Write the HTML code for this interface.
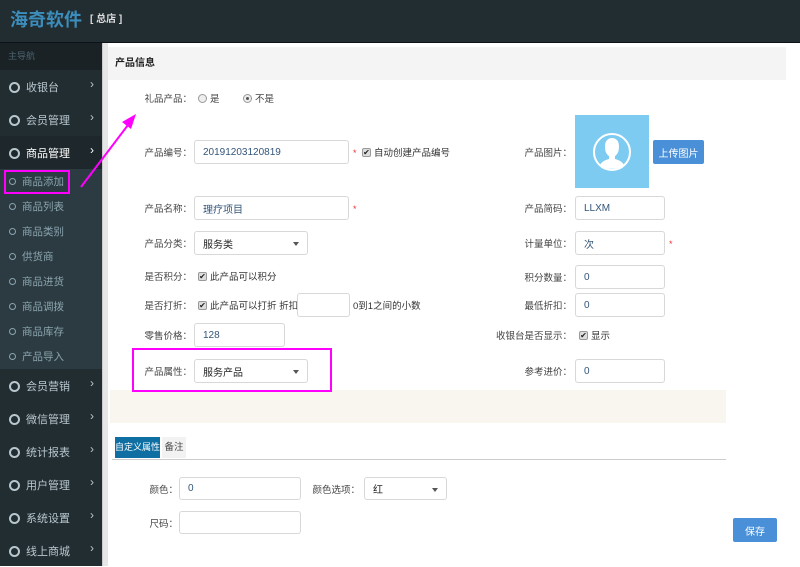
<!DOCTYPE html>
<html><head><meta charset="utf-8"><style>
*{margin:0;padding:0;box-sizing:border-box}
body{width:800px;height:566px;overflow:hidden;background:#fff;font-family:"Liberation Sans","Noto Sans CJK SC",sans-serif;font-size:10px;color:#333;position:relative}
.a{position:absolute}
#hd{left:0;top:0;width:800px;height:43px;background:#222d32;border-bottom:1px solid #0c1215}
#sb{left:0;top:43px;width:102px;height:523px;background:#222d32}
.mi{position:absolute;left:0;width:102px;height:33px;color:#b8c7ce;font-size:11px;display:flex;align-items:center;padding-left:26px}
.mi:before{content:"";position:absolute;left:9px;top:12px;width:7px;height:7px;border:2px solid #b8c7ce;border-radius:50%}
.mi:after{content:"›";position:absolute;right:8px;top:8px;font-size:12px;line-height:12px}
.si{position:absolute;left:0;width:102px;height:25px;background:#2c3b41;color:#8aa4af;font-size:10.5px;display:flex;align-items:center;padding-left:22px}
.si:before{content:"";position:absolute;left:9px;top:9px;width:5px;height:5px;border:1.5px solid #8aa4af;border-radius:50%}
.lb{position:absolute;height:24px;display:flex;align-items:center;justify-content:flex-end;font-size:9.5px;color:#444;white-space:nowrap}
.tx{position:absolute;height:24px;display:flex;align-items:center;font-size:9.5px;color:#333;white-space:nowrap}
.in{position:absolute;border:1px solid #d8d8d8;border-radius:3px;height:24px;display:flex;align-items:center;padding-left:8px;font-size:10px;color:#33557a;background:#fff}
.sel{color:#222}
.sel:after{content:"";position:absolute;right:8px;top:10px;border:3.5px solid transparent;border-top:4px solid #555}
.ck{display:inline-block;width:9px;height:9px;border:1px solid #999;background:#ddd;border-radius:2px;margin-right:3px;font-size:8px;line-height:7px;text-align:center;color:#222;position:relative}
.red{position:absolute;color:#e33;font-size:9px}
.bt{position:absolute;background:#4a90d9;border-radius:2px;color:#fff;font-size:10px;display:flex;align-items:center;justify-content:center}
</style></head><body>
<div id="hd" class="a"><span class="a" style="left:10px;top:9px;font-size:18px;line-height:22px;font-weight:bold;color:#3c8dbc">海奇软件</span><span class="a" style="left:90px;top:14px;font-size:10px;line-height:12px;color:#ddd;font-weight:bold">[ 总店 ]</span></div>
<div id="sb" class="a">
<div class="a" style="left:0;top:0;width:102px;height:27px;background:#1a2226;color:#4b646f;font-size:9px;line-height:27px;padding-left:8px">主导航</div>
<div class="mi" style="top:27px">收银台</div>
<div class="mi" style="top:60px">会员管理</div>
<div class="mi" style="top:93px;background:#1e282c;color:#fff">商品管理</div>
<div class="si" style="top:126px">商品添加</div>
<div class="si" style="top:151px">商品列表</div>
<div class="si" style="top:176px">商品类别</div>
<div class="si" style="top:201px">供货商</div>
<div class="si" style="top:226px">商品进货</div>
<div class="si" style="top:251px">商品调拨</div>
<div class="si" style="top:276px">商品库存</div>
<div class="si" style="top:301px">产品导入</div>
<div class="mi" style="top:326px">会员营销</div>
<div class="mi" style="top:359px">微信管理</div>
<div class="mi" style="top:392px">统计报表</div>
<div class="mi" style="top:425px">用户管理</div>
<div class="mi" style="top:458px">系统设置</div>
<div class="mi" style="top:491px">线上商城</div>
</div>
<div class="a" style="left:102px;top:43px;width:6px;height:523px;background:#e6e6e6;border-left:1px solid #ccc"></div>
<div class="a" style="left:108px;top:47px;width:678px;height:33px;background:#f4f4f4;font-weight:bold;font-size:10px;line-height:33px;padding-left:7px;color:#222">产品信息</div>

<div class="lb" style="left:120px;top:86px;width:72px">礼品产品：</div>
<div class="tx" style="left:198px;top:86px;color:#444"><span class="ck" style="border-radius:50%;background:#eee"></span>是</div>
<div class="tx" style="left:243px;top:86px;color:#444"><span class="ck" style="border-radius:50%;background:#eee"><span style="position:absolute;left:2px;top:2px;width:3px;height:3px;background:#555;border-radius:50%"></span></span>不是</div>

<div class="lb" style="left:120px;top:140px;width:72px">产品编号：</div>
<div class="in" style="left:194px;top:140px;width:155px">20191203120819</div>
<div class="red" style="left:353px;top:148px">*</div>
<div class="tx" style="left:362px;top:140px"><span class="ck">✔</span>自动创建产品编号</div>

<div class="lb" style="left:120px;top:196px;width:72px">产品名称：</div>
<div class="in" style="left:194px;top:196px;width:155px">理疗项目</div>
<div class="red" style="left:353px;top:204px">*</div>

<div class="lb" style="left:120px;top:231px;width:72px">产品分类：</div>
<div class="in sel" style="left:194px;top:231px;width:114px">服务类</div>

<div class="lb" style="left:120px;top:264px;width:72px">是否积分：</div>
<div class="tx" style="left:198px;top:264px"><span class="ck">✔</span>此产品可以积分</div>

<div class="lb" style="left:120px;top:293px;width:72px">是否打折：</div>
<div class="tx" style="left:198px;top:293px"><span class="ck">✔</span>此产品可以打折 折扣:</div>
<div class="in" style="left:297px;top:293px;width:53px"></div>
<div class="tx" style="left:353px;top:293px">0到1之间的小数</div>

<div class="lb" style="left:120px;top:323px;width:72px">零售价格：</div>
<div class="in" style="left:194px;top:323px;width:91px">128</div>

<div class="lb" style="left:120px;top:359px;width:72px">产品属性：</div>
<div class="in sel" style="left:194px;top:359px;width:114px">服务产品</div>

<div class="lb" style="left:490px;top:140px;width:82px">产品图片：</div>
<div class="a" style="left:575px;top:115px;width:74px;height:73px;background:#7ecbf2"><svg width="74" height="73" viewBox="0 0 74 73"><circle cx="37" cy="37" r="18" fill="none" stroke="#fff" stroke-width="2"/><path d="M25 50 C27 46 31 45 34 44 L34 41 C31 39 30 36 30 31 C30 26 33 23 37 23 C41 23 44 26 44 31 C44 36 43 39 40 41 L40 44 C43 45 47 46 49 50 C45 55 29 55 25 50Z" fill="#fff"/></svg></div>
<div class="bt" style="left:653px;top:140px;width:51px;height:24px">上传图片</div>

<div class="lb" style="left:490px;top:196px;width:82px">产品简码：</div>
<div class="in" style="left:575px;top:196px;width:90px">LLXM</div>
<div class="lb" style="left:490px;top:231px;width:82px">计量单位：</div>
<div class="in" style="left:575px;top:231px;width:90px">次</div>
<div class="red" style="left:669px;top:239px">*</div>
<div class="lb" style="left:490px;top:265px;width:82px">积分数量：</div>
<div class="in" style="left:575px;top:265px;width:90px">0</div>
<div class="lb" style="left:490px;top:293px;width:82px">最低折扣：</div>
<div class="in" style="left:575px;top:293px;width:90px">0</div>
<div class="lb" style="left:460px;top:323px;width:112px">收银台是否显示：</div>
<div class="tx" style="left:579px;top:323px"><span class="ck">✔</span>显示</div>
<div class="lb" style="left:490px;top:359px;width:82px">参考进价：</div>
<div class="in" style="left:575px;top:359px;width:90px">0</div>

<div class="a" style="left:110px;top:390px;width:616px;height:33px;background:#f8f6ef"></div>
<div class="a" style="left:115px;top:437px;width:45px;height:21px;background:#0f6fa3;color:#fff;font-size:9px;line-height:21px;text-align:center;white-space:nowrap">自定义属性</div>
<div class="a" style="left:162px;top:437px;width:24px;height:21px;background:#f2f2f2;color:#444;font-size:9.5px;line-height:21px;text-align:center">备注</div>
<div class="a" style="left:112px;top:459px;width:614px;height:1px;background:#ccc"></div>

<div class="lb" style="left:140px;top:477px;width:38px">颜色：</div>
<div class="in" style="left:179px;top:477px;width:122px;height:23px">0</div>
<div class="lb" style="left:288px;top:477px;width:72px">颜色选项：</div>
<div class="in sel" style="left:364px;top:477px;width:83px;height:23px">红</div>
<div class="lb" style="left:140px;top:511px;width:38px">尺码：</div>
<div class="in" style="left:179px;top:511px;width:122px;height:23px"></div>
<div class="bt" style="left:733px;top:518px;width:44px;height:24px">保存</div>

<div class="a" style="left:4px;top:170px;width:66px;height:24px;border:2px solid #f0f"></div>
<div class="a" style="left:132px;top:348px;width:200px;height:44px;border:2px solid #f0f"></div>
<svg class="a" style="left:0;top:0" width="800" height="566"><line x1="81" y1="187" x2="128" y2="125" stroke="#f0f" stroke-width="2"/><polygon points="136,114 122,122 131,129" fill="#f0f"/></svg>
</body></html>
